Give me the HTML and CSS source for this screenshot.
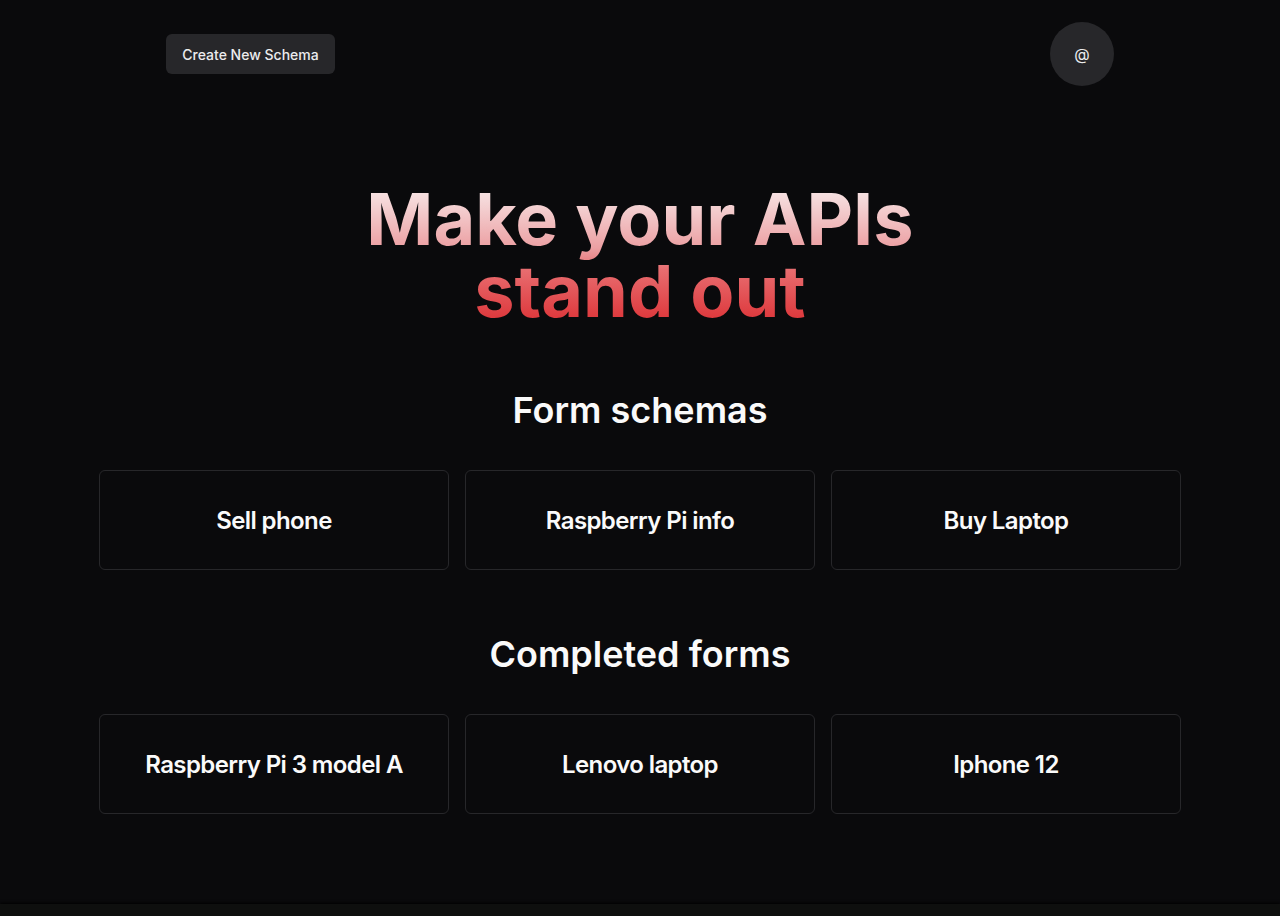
FILE: index.html
```html
<!DOCTYPE html>
<html lang="en">
<head>
<meta charset="utf-8">
<title>Schemas</title>
<link rel="stylesheet" href="styles.css">
</head>
<body>
<div class="page">
  <header class="topbar">
    <button class="btn">Create New Schema</button>
    <div class="avatar">@</div>
  </header>
  <main class="main">
    <h1 class="hero"><span class="hero-line">Make your APIs</span><span class="hero-line">stand out</span></h1>
    <section class="section">
      <h2 class="section-title">Form schemas</h2>
      <div class="grid">
        <div class="card">Sell phone</div>
        <div class="card">Raspberry Pi info</div>
        <div class="card">Buy Laptop</div>
      </div>
    </section>
    <section class="section">
      <h2 class="section-title">Completed forms</h2>
      <div class="grid">
        <div class="card">Raspberry Pi 3 model A</div>
        <div class="card">Lenovo laptop</div>
        <div class="card">Iphone 12</div>
      </div>
    </section>
  </main>
</div>
<footer class="footer"></footer>
</body>
</html>
```
FILE: styles.css
```css
* { box-sizing: border-box; }
html, body { margin: 0; padding: 0; }
body {
  background: #0a0a0c;
  color: #fafafa;
  font-family: Inter, "Noto Sans", sans-serif;
  height: 916px;
  overflow: hidden;
}
.page {
  height: 904px;
}
.topbar {
  display: flex;
  justify-content: space-between;
  align-items: center;
  padding: 22px 166px 0 166px;
  height: 86px;
}
.btn {
  height: 40px;
  padding: 0 16px;
  background: #27272a;
  color: #ececee;
  border: none;
  border-radius: 6px;
  font-family: Inter, sans-serif;
  font-size: 14px;
  font-weight: 500;
  min-width: 169px;
}
.avatar {
  width: 64px;
  height: 64px;
  border-radius: 50%;
  background: #27272a;
  color: #ececee;
  display: flex;
  align-items: center;
  justify-content: center;
  font-size: 16px;
}
.main {
  display: flex;
  flex-direction: column;
  align-items: center;
}
.hero {
  margin: 97px 0 0 0;
  display: flex;
  flex-direction: column;
  align-items: center;
  font-size: 72px;
  line-height: 72px;
  font-weight: 700;
  letter-spacing: 0;
  background: linear-gradient(to bottom, #f8ecec 0%, #eca0a3 45%, #e86d70 60%, #dc3034 100%);
  -webkit-background-clip: text;
  background-clip: text;
  color: transparent;
}
.hero-line { display: block; }
.section {
  margin-top: 63px;
  width: 1082px;
  display: flex;
  flex-direction: column;
  align-items: center;
  gap: 40px;
}
.section + .section { margin-top: 64px; }
.section-title {
  margin: 0;
  font-size: 36px;
  line-height: 40px;
  font-weight: 600;
  letter-spacing: 0;
  color: #fafafa;
}
.grid {
  width: 100%;
  display: grid;
  grid-template-columns: repeat(3, 1fr);
  gap: 16px;
}
.card {
  height: 100px;
  border: 1px solid #27272a;
  border-radius: 6px;
  display: flex;
  align-items: center;
  justify-content: center;
  font-size: 24px;
  font-weight: 600;
  letter-spacing: -0.025em;
  color: #fafafa;
}
.footer {
  height: 12px;
  background: #0e0f0e;
  box-shadow: 0 -1px 3px #000;
}
```
